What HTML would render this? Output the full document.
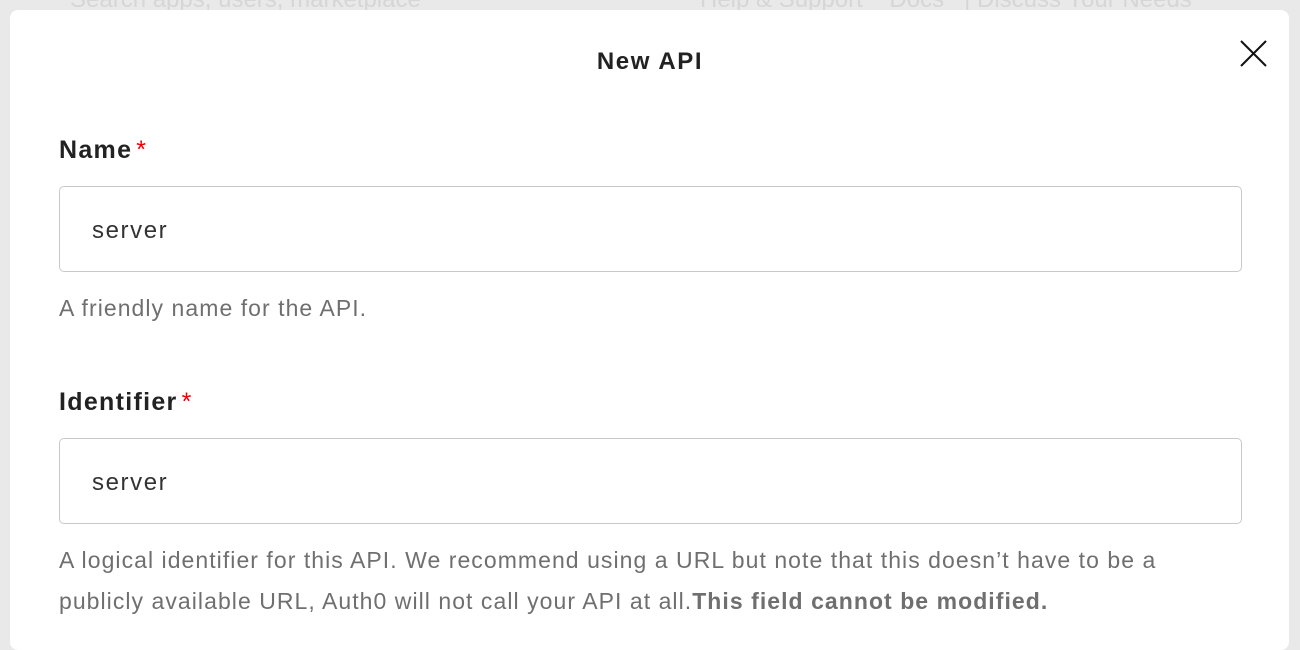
<!DOCTYPE html>
<html><head><style>
html,body{margin:0;padding:0;width:1300px;height:632px;overflow:hidden;background:#e9e9e9;font-family:"Liberation Sans",sans-serif;}
.top{position:absolute;top:-14px;left:70px;font-size:24px;color:#d6d6d6;white-space:nowrap;}
.top2{position:absolute;top:-14px;left:700px;font-size:24px;color:#d6d6d6;white-space:nowrap;}
.modal{position:absolute;left:10px;top:10px;width:1279px;height:640px;background:#fff;border-radius:8px;}
.title{position:absolute;top:48px;left:0;width:1300px;text-align:center;font-size:24px;font-weight:bold;color:#222;letter-spacing:1.6px;}
.x{position:absolute;left:1240px;top:40px;}
.label{position:absolute;left:59px;font-size:25px;font-weight:bold;color:#222;letter-spacing:1.3px;}
.label span{color:#e00;font-weight:normal;margin-left:4px;}
.input{position:absolute;left:59px;width:1183px;height:86px;border:1.5px solid #c9c9c9;border-radius:5px;box-sizing:border-box;}
.input div{position:absolute;left:32px;top:30px;font-size:24px;color:#333;letter-spacing:1.6px;}
.help{position:absolute;left:59px;font-size:23px;color:#6f6f6f;line-height:41px;white-space:nowrap;letter-spacing:1.05px;}
</style></head><body>
<div class="top">Search apps, users, marketplace</div>
<div class="top2">Help &amp; Support &nbsp;&nbsp; Docs &nbsp; | Discuss Your Needs</div>
<div class="modal"></div>
<div class="title">New API</div>
<svg class="x" width="28" height="28" viewBox="0 0 28 28"><path d="M1 1L26 26M26 1L1 26" stroke="#111" stroke-width="2" fill="none"/></svg>
<div class="label" style="top:136px">Name<span>*</span></div>
<div class="input" style="top:186px"><div>server</div></div>
<div class="help" style="top:288px">A friendly name for the API.</div>
<div class="label" style="top:388px">Identifier<span>*</span></div>
<div class="input" style="top:438px"><div>server</div></div>
<div class="help" style="top:540px">A logical identifier for this API. We recommend using a URL but note that this doesn’t have to be a<br>publicly available URL, Auth0 will not call your API at all.<b>This field cannot be modified.</b></div>
</body></html>
